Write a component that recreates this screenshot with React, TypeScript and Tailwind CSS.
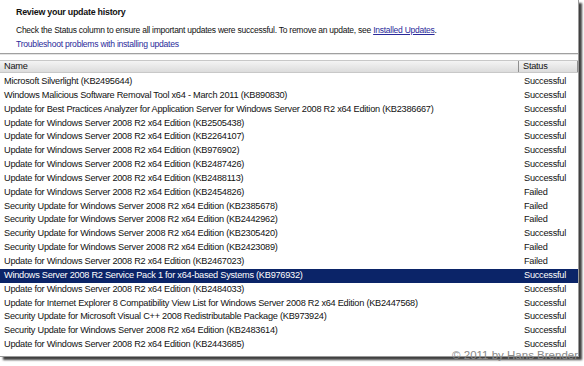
const rows: [string, string][] = [
  ['Microsoft Silverlight (KB2495644)', 'Successful'],
  ['Windows Malicious Software Removal Tool x64 - March 2011 (KB890830)', 'Successful'],
  ['Update for Best Practices Analyzer for Application Server for Windows Server 2008 R2 x64 Edition (KB2386667)', 'Successful'],
  ['Update for Windows Server 2008 R2 x64 Edition (KB2505438)', 'Successful'],
  ['Update for Windows Server 2008 R2 x64 Edition (KB2264107)', 'Successful'],
  ['Update for Windows Server 2008 R2 x64 Edition (KB976902)', 'Successful'],
  ['Update for Windows Server 2008 R2 x64 Edition (KB2487426)', 'Successful'],
  ['Update for Windows Server 2008 R2 x64 Edition (KB2488113)', 'Successful'],
  ['Update for Windows Server 2008 R2 x64 Edition (KB2454826)', 'Failed'],
  ['Security Update for Windows Server 2008 R2 x64 Edition (KB2385678)', 'Failed'],
  ['Security Update for Windows Server 2008 R2 x64 Edition (KB2442962)', 'Failed'],
  ['Security Update for Windows Server 2008 R2 x64 Edition (KB2305420)', 'Successful'],
  ['Security Update for Windows Server 2008 R2 x64 Edition (KB2423089)', 'Failed'],
  ['Update for Windows Server 2008 R2 x64 Edition (KB2467023)', 'Failed'],
  ['Windows Server 2008 R2 Service Pack 1 for x64-based Systems (KB976932)', 'Successful'],
  ['Update for Windows Server 2008 R2 x64 Edition (KB2484033)', 'Successful'],
  ['Update for Internet Explorer 8 Compatibility View List for Windows Server 2008 R2 x64 Edition (KB2447568)', 'Successful'],
  ['Security Update for Microsoft Visual C++ 2008 Redistributable Package (KB973924)', 'Successful'],
  ['Security Update for Windows Server 2008 R2 x64 Edition (KB2483614)', 'Successful'],
  ['Update for Windows Server 2008 R2 x64 Edition (KB2443685)', 'Successful'],
]

const SELECTED = 14

export default function App() {
  return (
    <div className="relative h-[366px] w-[584px] overflow-hidden bg-white font-['Liberation_Sans',Arial,sans-serif] text-[9.2px] tracking-[-0.25px] text-[#111]">
      <div className="flex h-[357px] w-[579px] flex-col border-r border-b border-[#9a9a9a] bg-white shadow-[3px_3px_2px_rgba(0,0,0,0.75)]">
        {/* page intro */}
        <div className="px-[16px] pt-[5px]">
          <p className="h-[15px] text-[8.9px] font-bold leading-[15px]">Review your update history</p>
          <p className="mt-[3px] h-[14px] text-[8.5px] leading-[14px]">
            Check the Status column to ensure all important updates were successful. To remove an update, see{' '}
            <span className="text-[#2a2a9a] underline">Installed Updates</span>.
          </p>
          <p className="h-[14px] text-[8.6px] leading-[14px] text-[#2a2a9a]">Troubleshoot problems with installing updates</p>
        </div>
        <div className="mt-[2px] h-[2px] border-t border-[#a0a0a0] bg-[#e4e4e4]" />

        {/* column headers */}
        <div className="mt-[5px] flex h-[13px] border-y border-[#c8c8c8] bg-gradient-to-b from-[#f4f4f4] to-[#dcdcdc] leading-[11px]">
          <div className="w-[519px] border-r border-[#8f8f8f] pl-[4px]">Name</div>
          <div className="flex-1 border-r border-[#8f8f8f] pl-[4px]">Status</div>
        </div>

        {/* update list */}
        <div className="mt-[2px] flex flex-col">
          {rows.map(([name, status], i) => (
            <div
              key={name}
              className={
                i === SELECTED
                  ? 'flex h-[13.85px] items-center bg-[#0b2468] text-white'
                  : 'flex h-[13.85px] items-center'
              }
            >
              <div className="w-[519px] truncate pl-[4px]">{name}</div>
              <div className="flex-1 pl-[5px]">{status}</div>
            </div>
          ))}
        </div>
      </div>

      <div className="absolute right-[6px] bottom-[4px] text-[11.5px] leading-[13px] tracking-normal text-[#8a8a8a]">
        © 2011 by Hans Brender
      </div>
    </div>
  )
}
